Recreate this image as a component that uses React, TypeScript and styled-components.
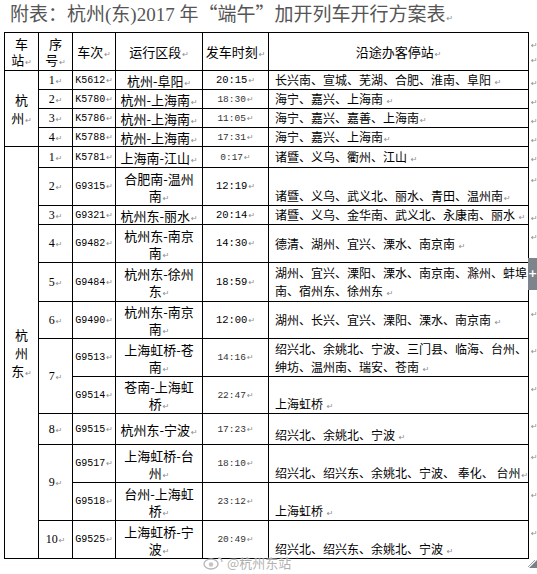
import React from "react";
import styled, { createGlobalStyle } from "styled-components";

const GlobalStyle = createGlobalStyle`
  html, body {
    margin: 0;
    padding: 0;
    background: #fff;
  }
  body {
    font-family: "Noto Sans CJK SC", sans-serif;
    color: #000;
  }
`;

type Train = {
  no?: string;
  noSpan?: number;
  train: string;
  route: string[];
  time: string;
  small?: boolean;
  stops: string[];
  bottom?: boolean;
  h: number;
};

// 杭州站
const hzRows: Train[] = [
  { no: "1", train: "K5612", route: ["杭州-阜阳"], time: "20:15", stops: ["长兴南、宣城、芜湖、合肥、淮南、阜阳 "], h: 19 },
  { no: "2", train: "K5780", route: ["杭州-上海南"], time: "18:30", small: true, stops: ["海宁、嘉兴、上海南 "], h: 19 },
  { no: "3", train: "K5786", route: ["杭州-上海南"], time: "11:05", small: true, stops: ["海宁、嘉兴、嘉善、上海南"], h: 19 },
  { no: "4", train: "K5788", route: ["杭州-上海南"], time: "17:31", small: true, stops: ["海宁、嘉兴、上海南"], h: 19 },
];

// 杭州东站
const hzdRows: Train[] = [
  { no: "1", train: "K5781", route: ["上海南-江山"], time: "0:17", small: true, stops: ["诸暨、义乌、衢州、江山 "], h: 21 },
  { no: "2", train: "G9315", route: ["合肥南-温州", "南"], time: "12:19", stops: ["诸暨、义乌、武义北、丽水、青田、温州南"], bottom: true, h: 38 },
  { no: "3", train: "G9321", route: ["杭州东-丽水"], time: "20:14", stops: ["诸暨、义乌、金华南、武义北、永康南、丽水 "], h: 19 },
  { no: "4", train: "G9482", route: ["杭州东-南京", "南"], time: "14:30", stops: ["德清、湖州、宜兴、溧水、南京南 "], h: 38 },
  { no: "5", train: "G9484", route: ["杭州东-徐州", "东"], time: "18:59", stops: ["湖州、宜兴、溧阳、溧水、南京南、滁州、蚌埠", "南、宿州东、徐州东 "], h: 39 },
  { no: "6", train: "G9490", route: ["杭州东-南京", "南"], time: "12:00", stops: ["湖州、长兴、宜兴、溧阳、溧水、南京南 "], h: 37 },
  { no: "7", noSpan: 2, train: "G9513", route: ["上海虹桥-苍", "南"], time: "14:16", small: true, stops: ["绍兴北、余姚北、宁波、三门县、临海、台州、", "绅坊、温州南、瑞安、苍南 "], h: 38 },
  { train: "G9514", route: ["苍南-上海虹", "桥"], time: "22:47", small: true, stops: ["上海虹桥 "], bottom: true, h: 37 },
  { no: "8", train: "G9515", route: ["杭州东-宁波"], time: "17:23", small: true, stops: ["绍兴北、余姚北、宁波 "], bottom: true, h: 31 },
  { no: "9", noSpan: 2, train: "G9517", route: ["上海虹桥-台", "州"], time: "18:10", small: true, stops: ["绍兴北、绍兴东、余姚北、宁波、 奉化、 台州"], bottom: true, h: 38 },
  { train: "G9518", route: ["台州-上海虹", "桥"], time: "23:12", small: true, stops: ["上海虹桥 "], bottom: true, h: 38 },
  { no: "10", train: "G9525", route: ["上海虹桥-宁", "波"], time: "20:49", small: true, stops: ["绍兴北、绍兴东、余姚北、宁波 "], bottom: true, h: 38 },
];

function Mark() {
  return <Pilcrow>↵</Pilcrow>;
}

function Lines({ lines }: { lines: string[] }) {
  return (
    <>
      {lines.map((l, i) => (
        <React.Fragment key={i}>
          {i > 0 && <br />}
          {l}
          {i === lines.length - 1 && <Mark />}
        </React.Fragment>
      ))}
    </>
  );
}

function TrainRow({ r, station, stationSpan }: { r: Train; station?: string[]; stationSpan?: number }) {
  return (
    <Tr $h={r.h}>
      {station && (
        <StationCell rowSpan={stationSpan}>
          <Lines lines={station} />
        </StationCell>
      )}
      {r.no && (
        <NoCell rowSpan={r.noSpan}>
          {r.no}
          <Mark />
        </NoCell>
      )}
      <TrainCell>
        {r.train}
        <Mark />
      </TrainCell>
      <RouteCell>
        <Lines lines={r.route} />
      </RouteCell>
      <TimeCell $small={r.small}>
        {r.time}
        <Mark />
      </TimeCell>
      <StopsCell $bottom={r.bottom}>
        <Lines lines={r.stops} />
      </StopsCell>
      <EndCell>
        <Mark />
      </EndCell>
    </Tr>
  );
}

export default function App() {
  return (
    <Page>
      <GlobalStyle />
      <Title>
        附表：杭州(东)2017 年<Cjk>“端午”</Cjk>加开列车开行方案表
        <Mark />
      </Title>
      <Table>
        <colgroup>
          <col style={{ width: 34 }} />
          <col style={{ width: 34 }} />
          <col style={{ width: 43 }} />
          <col style={{ width: 87 }} />
          <col style={{ width: 66 }} />
          <col style={{ width: 260 }} />
          <col style={{ width: 9 }} />
        </colgroup>
        <tbody>
          <Tr $h={38}>
            <HeadCell>
              车<br />站<Mark />
            </HeadCell>
            <HeadCell>
              序<br />号<Mark />
            </HeadCell>
            <HeadCell>
              车次<Mark />
            </HeadCell>
            <HeadCell>
              运行区段<Mark />
            </HeadCell>
            <HeadCell>
              发车时刻<Mark />
            </HeadCell>
            <HeadCell>
              沿途办客停站<Mark />
            </HeadCell>
            <EndCell>
              <Mark />
              <br />
              <Mark />
            </EndCell>
          </Tr>
          {hzRows.map((r, i) => (
            <TrainRow
              key={r.train}
              r={r}
              station={i === 0 ? ["杭", "州"] : undefined}
              stationSpan={hzRows.length}
            />
          ))}
          {hzdRows.map((r, i) => (
            <TrainRow
              key={r.train}
              r={r}
              station={i === 0 ? ["杭", "州", "东"] : undefined}
              stationSpan={hzdRows.length}
            />
          ))}
        </tbody>
      </Table>
      <MoveHandle>+</MoveHandle>
      <ResizeHandle>
        <svg width="9" height="8" viewBox="0 0 9 8">
          <path d="M1 8 L9 0 L9 8 Z" fill="#7b8088" />
          <path d="M0 7 L7 0" stroke="#9aa0a8" strokeWidth="1" />
        </svg>
      </ResizeHandle>
      <Watermark>
        <svg width="22" height="14" viewBox="0 0 22 14">
          <ellipse cx="8" cy="8" rx="7" ry="5" fill="none" stroke="#b8b8b8" strokeWidth="1.4" />
          <circle cx="8" cy="8.5" r="2.2" fill="#c4c4c4" />
          <path d="M15 2 Q19 2 19 6" fill="none" stroke="#bdbdbd" strokeWidth="1.3" />
        </svg>
        @杭州东站
      </Watermark>
    </Page>
  );
}

const Page = styled.div`
  position: relative;
  width: 537px;
  height: 574px;
  overflow: hidden;
  background: #fff;
`;

const Title = styled.div`
  height: 32px;
  padding-left: 10px;
  font-family: "Liberation Serif", "Noto Sans CJK SC", serif;
  font-size: 19px;
  line-height: 26px;
  color: #555;
  white-space: nowrap;
`;

const Cjk = styled.span`
  font-family: "Noto Sans CJK SC", sans-serif;
`;

const Pilcrow = styled.span`
  font-family: "DejaVu Sans", sans-serif;
  font-size: 8px;
  line-height: 0;
  color: #8c8c8c;
  margin-left: 1px;
`;

const Table = styled.table`
  margin-left: 4px;
  border-collapse: collapse;
  table-layout: fixed;
  width: 533px;
`;

const Tr = styled.tr<{ $h: number }>`
  height: ${(p) => p.$h}px;
`;

const Cell = styled.td`
  border: 1px solid #000;
  padding: 0;
  text-align: center;
  vertical-align: middle;
  color: #000;
  line-height: 15px;
`;

const HeadCell = styled(Cell)`
  font-size: 13px;
  line-height: 16px;
`;

const StationCell = styled(Cell)`
  font-size: 13px;
  line-height: 18px;
`;

const NoCell = styled(Cell)`
  font-family: "Liberation Serif", serif;
  font-size: 12px;
`;

const TrainCell = styled(Cell)`
  font-family: "Liberation Mono", monospace;
  font-size: 10px;
`;

const RouteCell = styled(Cell)`
  font-size: 13px;
  line-height: 17px;
  white-space: nowrap;
`;

const TimeCell = styled(Cell)<{ $small?: boolean }>`
  font-family: "Liberation Mono", monospace;
  font-size: ${(p) => (p.$small ? "9.5px" : "10.5px")};
  color: ${(p) => (p.$small ? "#333" : "#000")};
`;

const StopsCell = styled(Cell)<{ $bottom?: boolean }>`
  text-align: left;
  padding: 0 0 0 6px;
  font-size: 12px;
  line-height: 18px;
  white-space: pre;
  vertical-align: ${(p) => (p.$bottom ? "bottom" : "middle")};
`;

const EndCell = styled.td`
  border: none;
  padding: 1px 0 0 1px;
  vertical-align: top;
  line-height: 15px;
  text-align: left;
`;

const MoveHandle = styled.div`
  position: absolute;
  left: 528px;
  top: 258px;
  width: 9px;
  height: 32px;
  background: #7d848c;
  color: #fff;
  font-family: "DejaVu Sans", sans-serif;
  font-size: 11px;
  font-weight: bold;
  line-height: 32px;
  text-align: center;
`;

const ResizeHandle = styled.div`
  position: absolute;
  left: 528px;
  top: 560px;
  width: 9px;
  height: 8px;
  line-height: 0;
`;

const Watermark = styled.div`
  position: absolute;
  left: 203px;
  top: 554px;
  display: flex;
  align-items: center;
  gap: 2px;
  font-size: 13px;
  line-height: 18px;
  color: rgba(150, 150, 150, 0.75);
  text-shadow: 0 0 2px #fff, 0 0 2px #fff;
  white-space: nowrap;
`;
